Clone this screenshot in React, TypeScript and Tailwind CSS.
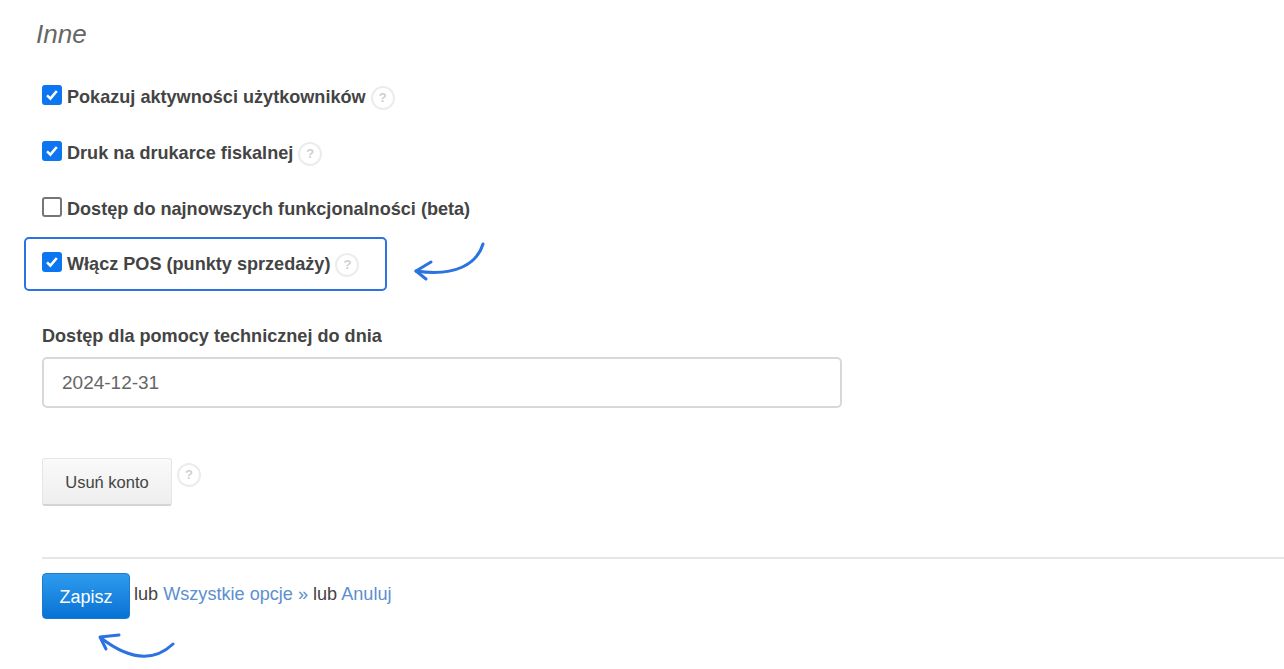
const font = "[font-family:'Liberation_Sans',Arial,sans-serif]";

const Help = ({ className = '' }: { className?: string }) => (
  <span
    className={`inline-flex h-6 w-6 shrink-0 items-center justify-center rounded-full border-2 border-[#ececec] bg-white text-[13px] font-bold text-[#cfcfcf] ${className}`}
  >
    ?
  </span>
);

const Box = ({ checked }: { checked: boolean }) =>
  checked ? (
    <span className="flex h-[20px] w-[20px] shrink-0 items-center justify-center rounded-[3px] bg-[#0b76f0]">
      <svg width="14" height="14" viewBox="0 0 14 14" fill="none" stroke="white" strokeWidth="2.6">
        <path d="M2 7.4 5.4 10.6 11.8 3" />
      </svg>
    </span>
  ) : (
    <span className="block h-[20px] w-[20px] shrink-0 rounded-[3px] border-2 border-[#767676] bg-white" />
  );

const Row = ({ checked, label, help = true }: { checked: boolean; label: string; help?: boolean }) => (
  <div className="flex h-6 items-center">
    <span className="-mt-1 block shrink-0">
      <Box checked={checked} />
    </span>
    <span className="ml-[5px] pt-[2px] text-[18.1px] font-bold whitespace-nowrap text-[#444]">{label}</span>
    {help && <Help className="mt-[2px] ml-[5px]" />}
  </div>
);

export default function App() {
  return (
    <div className={`relative h-[669px] w-[1284px] overflow-hidden bg-white pl-[42px] ${font}`}>
      <h2 className="-ml-[6px] pt-[18px] text-[26px] leading-[32px] font-normal text-[#666] italic">Inne</h2>

      <div className="mt-[35px] flex flex-col gap-[32px]">
        <Row checked label="Pokazuj aktywności użytkowników" />
        <Row checked label="Druk na drukarce fiskalnej" />
        <Row checked={false} label="Dostęp do najnowszych funkcjonalności (beta)" help={false} />
      </div>

      <div className="mt-[16px] -ml-[18px] flex h-[54px] w-[363px] items-center rounded-[5px] border-2 border-[#2a73e0] pl-[16px]">
        <Row checked label="Włącz POS (punkty sprzedaży)" />
      </div>

      <label className="mt-[34px] block text-[18.1px] leading-[22px] font-bold text-[#444]">
        Dostęp dla pomocy technicznej do dnia
      </label>
      <div className="mt-[10px] flex h-[51px] w-[800px] items-center rounded-[5px] border-2 border-[#d8d8d8] pt-[2px] pl-[18px] text-[19px] text-[#666]">
        2024-12-31
      </div>

      <div className="mt-[50px] flex items-start">
        <button className="h-[48px] w-[130px] rounded-[3px] border border-[#e6e6e6] border-b-2 border-b-[#d4d4d4] bg-gradient-to-b from-[#fafafa] to-[#eeeeee] pt-[2px] text-[16.5px] font-normal text-[#444]">
          Usuń konto
        </button>
        <Help className="mt-[5px] ml-[5px]" />
      </div>

      <div className="mt-[51px] h-[2px] bg-[#e6e6e6]" />

      <div className="mt-[14px] flex items-center text-[18.1px] text-[#444]">
        <button className="h-[46px] w-[88px] rounded-[4px] border border-[#1c7ad0] bg-gradient-to-b from-[#2e9bee] to-[#0572d4] pt-[3px] text-[18px] text-white">
          Zapisz
        </button>
        <span className="ml-[4px] -translate-y-[1px]">
          lub <a className="text-[#5b8fd0]">Wszystkie opcje »</a> lub <a className="text-[#5b8fd0]">Anuluj</a>
        </span>
      </div>

      <svg className="absolute top-[240px] left-[410px]" width="80" height="44" viewBox="0 0 80 44" fill="none" stroke="#2a73e0" strokeWidth="3" strokeLinecap="round" strokeLinejoin="round">
        <path d="M73 4C67 24 45 37 6 31" />
        <path d="M21 22 6 31 16 39" />
      </svg>
      <svg className="absolute top-[630px] left-[95px]" width="84" height="32" viewBox="0 0 84 32" fill="none" stroke="#2a73e0" strokeWidth="3" strokeLinecap="round" strokeLinejoin="round">
        <path d="M78 14C60 31 36 31 6 8" />
        <path d="M24 5 5 7 11 19" />
      </svg>
    </div>
  );
}
